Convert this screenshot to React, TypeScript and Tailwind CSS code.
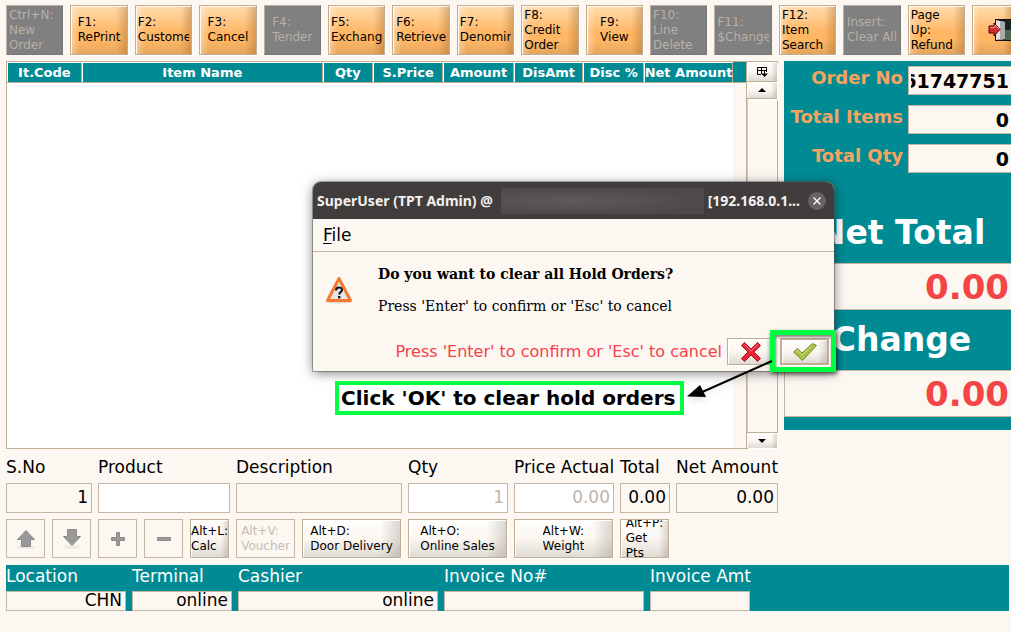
import React from 'react';
import clsx from 'clsx';

const functionKeys = [
  { text: 'Ctrl+N:\nNew Order', disabled: true },
  { text: 'F1:\nRePrint' },
  { text: 'F2:\nCustomer' },
  { text: 'F3:\nCancel' },
  { text: 'F4:\nTender', disabled: true },
  { text: 'F5:\nExchange' },
  { text: 'F6:\nRetrieve' },
  { text: 'F7:\nDenomination' },
  { text: 'F8:\nCredit Order' },
  { text: 'F9:\nView' },
  { text: 'F10:\nLine Delete', disabled: true },
  { text: 'F11:\n$Change', disabled: true },
  { text: 'F12:\nItem Search' },
  { text: 'Insert:\nClear All', disabled: true },
  { text: 'Page Up:\nRefund' },
];

const columns = [
  { title: 'It.Code', width: 'w-[10.3%]' },
  { title: 'Item Name', width: 'w-[33.2%]' },
  { title: 'Qty', width: 'w-[6.9%]' },
  { title: 'S.Price', width: 'w-[9.7%]' },
  { title: 'Amount', width: 'w-[9.7%]' },
  { title: 'DisAmt', width: 'w-[9.6%]' },
  { title: 'Disc %', width: 'w-[8.3%]' },
  { title: 'Net Amount', width: 'w-[12.3%]' },
];

const entryFields = [
  { id: 'sno', label: 'S.No', value: '1', width: 'w-[86px]', look: 'bg-[#fcf7f1]' },
  { id: 'product', label: 'Product', value: '', width: 'w-[132px]', look: 'bg-white' },
  { id: 'description', label: 'Description', value: '', width: 'w-[166px]', look: 'bg-[#fcf7f1]' },
  { id: 'qty', label: 'Qty', value: '1', width: 'w-[100px]', look: 'bg-white text-[#bdb5ad]' },
  { id: 'price', label: 'Price Actual', value: '0.00', width: 'w-[100px]', look: 'bg-white text-[#bdb5ad]' },
  { id: 'total', label: 'Total', value: '0.00', width: 'w-[50px]', look: 'bg-[#fcf7f1]' },
  { id: 'net', label: 'Net Amount', value: '0.00', width: 'w-[102px]', look: 'bg-[#fcf7f1]' },
];

const shortcuts = [
  { text: 'Alt+L:\nCalc', width: 'w-[39px]' },
  { text: 'Alt+V:\nVoucher', width: 'w-[59px]', disabled: true },
  { text: 'Alt+D:\nDoor Delivery', width: 'w-[99px]' },
  { text: 'Alt+O:\nOnline Sales', width: 'w-[99px]' },
  { text: 'Alt+W:\nWeight', width: 'w-[99px]' },
  { text: 'Alt+P:\nGet\nPts', width: 'w-[49px]' },
];

const session = [
  { id: 'location', label: 'Location', value: 'CHN', width: 'w-[120px]' },
  { id: 'terminal', label: 'Terminal', value: 'online', width: 'w-[100px]' },
  { id: 'cashier', label: 'Cashier', value: 'online', width: 'w-[200px]' },
  { id: 'invoice-no', label: 'Invoice No#', value: '', width: 'w-[200px]' },
  { id: 'invoice-amt', label: 'Invoice Amt', value: '', width: 'w-[100px]' },
];

const orange =
  'border-[#bfae94] shadow-[inset_1px_1px_0_#fff8ee,1px_1px_0_#fff] bg-[linear-gradient(90deg,rgba(255,255,255,0.35),transparent_16%,transparent_80%,rgba(150,95,40,0.35)),linear-gradient(180deg,#ffdcae,#ffb765_55%,#ffb765_70%,#e5a55d)]';
const pale =
  'border-[#bfae94] shadow-[inset_1px_1px_0_#fff,1px_1px_0_#fff] bg-[linear-gradient(90deg,transparent_80%,rgba(120,115,105,0.28)),linear-gradient(180deg,#fffefc,#fcf7f1_50%,#dedad4)]';

function KeyLabel({ text }: { text: string }) {
  return (
    <span className="max-w-full overflow-hidden whitespace-pre-line text-left text-xs leading-[15px]">
      {text}
    </span>
  );
}

function DoorIcon() {
  return (
    <svg width="32" height="24" viewBox="0 0 32 24" className="shrink-0">
      <rect x="7" y="1" width="24" height="22" fill="#111" />
      <path d="M17 2h14v10H17z" fill="#1b211c" />
      <path d="M17 12h14v10H17z" fill="#4c6650" />
      <path d="M8 2l9 2v17l-9 1z" fill="#e2e2e2" />
      <path d="M12 3l5 1v17l-5 1z" fill="#aaa" />
      <path d="M1 8h5V5l6 6.500-6 6.500v-3H1z" fill="#d42b2b" stroke="#4a0707" />
      <path d="M2 9.500h5V7l4 4" fill="none" stroke="#f58d8d" />
    </svg>
  );
}

function Arrow({ down }: { down?: boolean }) {
  return (
    <svg width="20" height="22" viewBox="0 0 20 22">
      <ellipse cx="10" cy="19" rx="9" ry="2" fill="#efeae4" />
      {down ? (
        <path d="M5.500 1.500h9v7h4L10 17.500 1.500 8.500h4z" fill="#999" stroke="#8a8a8a" />
      ) : (
        <path d="M10 2.500l8.500 9h-4v7h-9v-7h-4z" fill="#999" stroke="#8a8a8a" />
      )}
    </svg>
  );
}

function Sign({ plus }: { plus?: boolean }) {
  return (
    <svg width="16" height="16" viewBox="0 0 16 16">
      <path
        d={plus ? 'M6.500 1.500h3v5h5v3h-5v5h-3v-5h-5v-3h5z' : 'M1.500 6.500h13v3h-13z'}
        fill="#999"
        stroke="#8a8a8a"
        strokeLinejoin="round"
      />
    </svg>
  );
}

const rowTools = [
  { name: 'Move up', icon: <Arrow /> },
  { name: 'Move down', icon: <Arrow down /> },
  { name: 'Add row', icon: <Sign plus /> },
  { name: 'Remove row', icon: <Sign /> },
];

function Toolbar() {
  return (
    <div className="flex gap-[7px] pl-[6px] pt-[5px]">
      {functionKeys.map(({ text, disabled }) => (
        <button
          key={text}
          disabled={disabled}
          className={clsx(
            'flex h-[50px] min-w-0 flex-1 items-center justify-center overflow-hidden border px-[2px]',
            disabled
              ? 'border-[#bab0a4] border-b-[#777] border-r-[#777] bg-[#808080] text-[#b8b0a5]'
              : orange
          )}
        >
          <KeyLabel text={text} />
        </button>
      ))}
      <button
        aria-label="Exit"
        className={clsx('flex h-[50px] w-[39px] shrink-0 items-center overflow-hidden border border-r-0 pl-[15px]', orange)}
      >
        <DoorIcon />
      </button>
    </div>
  );
}

function ItemTable() {
  return (
    <div className="flex min-w-0 flex-1 border border-[#bfae94] bg-[#fcf7f1]">
      <div className="flex min-w-0 flex-1 flex-col">
        <div className="border-b border-[#bfae94] bg-[#008b94] pr-[13px]">
          <table className="w-full table-fixed border-separate border-spacing-0 text-[13px] leading-[19px] text-white">
            <thead>
              <tr>
                {columns.map(({ title, width }) => (
                  <th
                    key={title}
                    className={clsx(
                      'whitespace-nowrap border-l border-r border-t border-l-white border-r-[#bfae94] border-t-white p-0',
                      width
                    )}
                  >
                    {title}
                  </th>
                ))}
              </tr>
            </thead>
          </table>
        </div>
        <div className="mr-[13px] flex-1 bg-white"></div>
      </div>
      <div className="flex w-[31px] flex-col border-l border-[#bfae94]">
        <button aria-label="Columns" className={clsx('flex h-5 items-center justify-center border-b', pale)}>
          <svg width="12" height="12" viewBox="0 0 12 12" fill="none" stroke="#000">
            <path d="M5 8.500H1.500v-7h9V6M1.500 4.500h9M5.500 1.500V8" />
            <path d="M5 7.500h7L8.500 11z" fill="#000" stroke="none" />
            <path d="M8.500 5v4" />
          </svg>
        </button>
        <button aria-label="Scroll up" className={clsx('flex h-[17px] items-center justify-center border-b', pale)}>
          <svg width="8" height="4" viewBox="0 0 8 4"><path d="M0 4l4-4 4 4z" /></svg>
        </button>
        <div className="flex-1 border-l border-[#d8ccba]"></div>
        <button aria-label="Scroll down" className={clsx('flex h-4 items-center justify-center border-t', pale)}>
          <svg width="8" height="4" viewBox="0 0 8 4"><path d="M0 0l4 4 4-4z" /></svg>
        </button>
      </div>
    </div>
  );
}

function Summary() {
  const rows = [
    { id: 'order-no', label: 'Order No', value: '61747751' },
    { id: 'total-items', label: 'Total Items', value: '0' },
    { id: 'total-qty', label: 'Total Qty', value: '0' },
  ];
  const totals = [
    { id: 'net-total', label: 'Net Total' },
    { id: 'change', label: 'Change' },
  ];
  return (
    <div className="w-[227px] shrink-0 bg-[#008b94] pb-[13px] pt-[5px] font-bold">
      <div className="mb-[30px] flex flex-col gap-[10px] text-lg leading-6">
        {rows.map(({ id, label, value }) => (
          <div key={id} className="flex justify-end gap-[5px]">
            <label htmlFor={id} className="text-[#f4a460]">{label}</label>
            <input
              id={id}
              readOnly
              dir="rtl"
              value={value}
              className="h-[29px] w-[103px] border border-r-0 border-[#c3b7a8] bg-[#fcf7f1] pl-[2px] pr-[2px] text-right text-[19px]"
            />
          </div>
        ))}
      </div>
      {totals.map(({ id, label }) => (
        <div key={id}>
          <label htmlFor={id} className="block pl-2 text-center text-[33px] leading-[60px] text-white">{label}</label>
          <input
            id={id}
            readOnly
            value="0.00"
            className="block h-[47px] w-full border border-r-0 border-[#c3b7a8] bg-[#fcf7f1] pr-[2px] text-right text-[34px] leading-10 text-[#f34545]"
          />
        </div>
      ))}
    </div>
  );
}

function Entry() {
  return (
    <div className="px-[6px]">
      <div className="flex gap-[6px] pt-[8px]">
        {entryFields.map(({ id, label, value, width, look }) => (
          <div key={id} className={width}>
            <label htmlFor={id} className="block whitespace-nowrap leading-5">{label}</label>
            <input
              id={id}
              readOnly={id !== 'product'}
              defaultValue={value}
              className={clsx('mt-[6px] block h-[30px] w-full border border-[#c3b7a8] px-[3px] pb-[2px] text-right', look)}
            />
          </div>
        ))}
      </div>
      <div className="flex gap-[7px] pt-[6px]">
        {rowTools.map(({ name, icon }) => (
          <button
            key={name}
            aria-label={name}
            className="flex h-[39px] w-[39px] items-center justify-center border border-[#c3b7a8]"
          >
            {icon}
          </button>
        ))}
        {shortcuts.map(({ text, width, disabled }) => (
          <button
            key={text}
            disabled={disabled}
            className={clsx(
              'flex h-[39px] items-center justify-center overflow-hidden border',
              disabled ? 'border-[#c3b7a8] text-[#c6bcb1]' : pale,
              width
            )}
          >
            <KeyLabel text={text} />
          </button>
        ))}
      </div>
    </div>
  );
}

function SessionBar() {
  return (
    <div className="ml-[6px] mr-[2px] mt-[7px] flex gap-[6px] bg-[#008b94]">
      {session.map(({ id, label, value, width }) => (
        <div key={id} className={width}>
          <label htmlFor={id} className="block whitespace-nowrap leading-[22px] text-white">{label}</label>
          <input
            id={id}
            readOnly
            value={value}
            className="mt-1 block h-5 w-full border border-[#c3b7a8] bg-[#fcf7f1] px-[3px] text-right"
          />
        </div>
      ))}
    </div>
  );
}

function ConfirmDialog() {
  return (
    <div
      role="dialog"
      aria-label="Clear hold orders"
      className="absolute left-[313px] top-[182px] w-[521px] rounded-t-lg bg-[#fcf7f1] shadow-[0_2px_12px_rgba(0,0,0,0.5),0_0_0_1px_rgba(110,110,110,0.5)]"
    >
      <div className="flex h-[37px] items-center rounded-t-lg bg-[#413d3c] pl-1 pr-2 font-['Noto_Sans','Open_Sans',sans-serif] text-sm font-bold text-[#f2f1ef]">
        <span className="whitespace-nowrap">SuperUser (TPT Admin) @</span>
        <span className="ml-2 mr-1 h-[26px] flex-1 bg-[radial-gradient(ellipse_at_35%_50%,#5d5b5a,#4d4a49_70%)]"></span>
        <span className="whitespace-nowrap">[192.168.0.1...</span>
        <button aria-label="Close" className="ml-2 flex size-[18px] items-center justify-center rounded-full bg-[#656463]">
          <svg width="8" height="8" viewBox="0 0 8 8" stroke="#fff" strokeWidth="1.3">
            <path d="M0.500 0.500l7 7M7.500 0.500l-7 7" />
          </svg>
        </button>
      </div>
      <div className="border-b border-[#bfb49c] px-[10px] leading-8">
        <button><u className="underline-offset-2">F</u>ile</button>
      </div>
      <div className="flex items-center gap-[25px] px-3 pt-2 font-['DejaVu_Serif',serif] text-sm">
        <svg width="28" height="28" viewBox="0 0 28 28">
          <ellipse cx="14" cy="26" rx="13" ry="1.500" fill="#ddd6cf" />
          <path d="M14 2.500L25.500 24.500h-23z" fill="#e6e6e6" stroke="#f57930" strokeWidth="3" strokeLinejoin="round" />
          <path d="M11 14.500c0-4 6-4 6-.500 0 2-2.800 2-2.800 4.500" fill="none" stroke="#111" strokeWidth="2" />
          <rect x="13" y="20" width="2.400" height="2.400" fill="#111" />
        </svg>
        <div>
          <p className="font-bold leading-7">Do you want to clear all Hold Orders?</p>
          <p className="pt-1 leading-7">Press 'Enter' to confirm or 'Esc' to cancel</p>
        </div>
      </div>
      <div className="flex items-center justify-end pb-[6px] pr-[5px] pt-[18px]">
        <span className="mr-[5px] text-base text-[#f8404c]">Press 'Enter' to confirm or 'Esc' to cancel</span>
        <button aria-label="Cancel" className={clsx('flex h-[27px] w-12 items-center justify-center border', pale)}>
          <svg width="22" height="22" viewBox="0 0 22 22">
            <path d="M4.500 1.500L11 8l6.500-6.500 3 3L14 11l6.500 6.500-3 3L11 14l-6.500 6.500-3-3L8 11 1.500 4.500z" fill="#ee2435" stroke="#ab1120" strokeLinejoin="round" />
            <path d="M4.500 3.500L11 10l6.500-6.500" fill="none" stroke="#fb7f88" />
          </svg>
        </button>
        <div className="relative ml-[5px]">
          <button aria-label="OK" className={clsx('flex h-[27px] w-[49px] items-center justify-center border-2', pale)}>
            <svg width="26" height="20" viewBox="0 0 26 20">
              <path d="M1.500 10l4-3.500L10 11l10.500-9.500 4 2L10.500 18.500z" fill="#aabf4b" stroke="#758d20" strokeLinejoin="round" />
              <path d="M3.500 10l2-1.800L10 13 20.500 3.300" fill="none" stroke="#cddd83" />
            </svg>
          </button>
          <div className="pointer-events-none absolute -bottom-[7px] -left-[10px] -right-[7px] -top-2 border-[5px] border-[#00ff40] shadow-[1px_2px_4px_rgba(0,0,0,0.6),inset_1px_2px_3px_rgba(0,0,0,0.5)]"></div>
        </div>
      </div>
    </div>
  );
}

function Callout() {
  return (
    <>
      <p className="absolute left-[335px] top-[381px] whitespace-nowrap border-4 border-[#00ff40] bg-white pl-[2px] pr-[5px] text-xl font-bold leading-[26px]">
        Click 'OK' to clear hold orders
      </p>
      <svg className="absolute left-[684px] top-[356px] drop-shadow-md" width="92" height="48" viewBox="0 0 92 48">
        <path d="M88 5L16 37" stroke="#000" strokeWidth="2" />
        <path d="M3 40.500L16 29l6 12z" fill="#000" />
      </svg>
    </>
  );
}

function App() {
  return (
    <div className="relative flex min-h-screen flex-col overflow-hidden bg-[#fcf7f1] pb-[21px] font-['DejaVu_Sans',sans-serif] text-[17px] text-black">
      <Toolbar />
      <main className="flex flex-1 gap-[6px] pl-[6px] pt-[6px]">
        <ItemTable />
        <div className="flex items-start">
          <Summary />
        </div>
      </main>
      <Entry />
      <SessionBar />
      <ConfirmDialog />
      <Callout />
    </div>
  );
}

export default App;
